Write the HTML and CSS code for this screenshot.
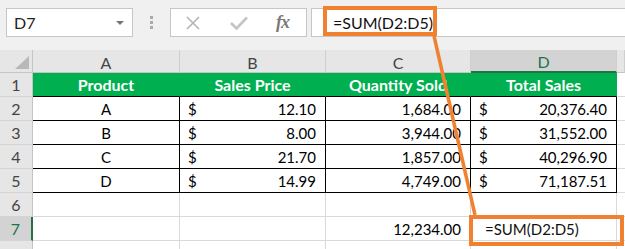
FILE: index.html
```html
<!DOCTYPE html>
<html lang="en">
<head>
    <meta charset="UTF-8">
    <meta name="viewport" content="width=device-width, initial-scale=1.0">
    <title>SUM formula</title>
    <link rel="stylesheet" href="styles.css">
</head>
<body>

    <div class="topbar">
        <div class="namebox">
            <span class="cellref">D7</span>
            <span class="caret"></span>
        </div>
        <div class="grip"><i></i><i></i><i></i></div>
        <div class="fx-buttons">
            <svg class="icon-x" width="14" height="14" viewBox="0 0 14 14">
                <path d="M1 1 L13 13 M13 1 L1 13" stroke="#b4b4b4" stroke-width="1.6" fill="none"/>
            </svg>
            <svg class="icon-check" width="18" height="14" viewBox="0 0 18 14">
                <path d="M1 7 L6.5 12.5 L17 1.5" stroke="#c4c4c4" stroke-width="2.6" fill="none"/>
            </svg>
            <span class="fx">fx</span>
        </div>
        <div class="formula">
            <span class="formula-text">=SUM(D2:D5)</span>
        </div>
    </div>

    <div class="sheet">
        <!-- column headers -->
        <div class="corner"><span class="tri"></span></div>
        <div class="colhead">A</div>
        <div class="colhead">B</div>
        <div class="colhead">C</div>
        <div class="colhead active">D</div>
        <div class="colhead"></div>

        <!-- row 1 -->
        <div class="rowhead">1</div>
        <div class="cell head">Product</div>
        <div class="cell head">Sales Price</div>
        <div class="cell head">Quantity Sold</div>
        <div class="cell head">Total Sales</div>
        <div class="cell"></div>

        <!-- row 2 -->
        <div class="rowhead">2</div>
        <div class="cell tbl center">A</div>
        <div class="cell tbl money"><span>$</span><span>12.10</span></div>
        <div class="cell tbl num">1,684.00</div>
        <div class="cell tbl money"><span>$</span><span>20,376.40</span></div>
        <div class="cell"></div>

        <!-- row 3 -->
        <div class="rowhead">3</div>
        <div class="cell tbl center">B</div>
        <div class="cell tbl money"><span>$</span><span>8.00</span></div>
        <div class="cell tbl num">3,944.00</div>
        <div class="cell tbl money"><span>$</span><span>31,552.00</span></div>
        <div class="cell"></div>

        <!-- row 4 -->
        <div class="rowhead">4</div>
        <div class="cell tbl center">C</div>
        <div class="cell tbl money"><span>$</span><span>21.70</span></div>
        <div class="cell tbl num">1,857.00</div>
        <div class="cell tbl money"><span>$</span><span>40,296.90</span></div>
        <div class="cell"></div>

        <!-- row 5 -->
        <div class="rowhead">5</div>
        <div class="cell tbl center">D</div>
        <div class="cell tbl money"><span>$</span><span>14.99</span></div>
        <div class="cell tbl num">4,749.00</div>
        <div class="cell tbl money"><span>$</span><span>71,187.51</span></div>
        <div class="cell"></div>

        <!-- row 6 -->
        <div class="rowhead">6</div>
        <div class="cell"></div>
        <div class="cell"></div>
        <div class="cell"></div>
        <div class="cell"></div>
        <div class="cell"></div>

        <!-- row 7 -->
        <div class="rowhead active">7</div>
        <div class="cell"></div>
        <div class="cell"></div>
        <div class="cell num">12,234.00</div>
        <div class="cell selected"><span class="cell-formula">=SUM(D2:D5)</span></div>
        <div class="cell"></div>

        <!-- row 8, only its top edge is in view -->
        <div class="rowhead"></div>
        <div class="cell"></div>
        <div class="cell"></div>
        <div class="cell"></div>
        <div class="cell"></div>
        <div class="cell"></div>
    </div>

    <!-- callout drawn on top of the sheet -->
    <svg class="callout" width="625" height="249" viewBox="0 0 625 249">
        <rect x="325" y="8" width="110" height="26" fill="none" stroke="#f08130" stroke-width="4"/>
        <line x1="434" y1="36" x2="475" y2="215" stroke="#f08130" stroke-width="3.5"/>
        <rect x="471" y="217" width="151" height="27" fill="none" stroke="#f08130" stroke-width="4"/>
    </svg>

</body>
</html>
```

FILE: styles.css
```css
/* General styles */
body {
    margin: 0;
    width: 625px;
    height: 249px;
    overflow: hidden;
    position: relative;
    font-family: Lato, "Liberation Sans", sans-serif;
    background-color: #fff;
    color: #000;
}

/* Formula bar */
.topbar {
    height: 50px;
    box-sizing: border-box;
    padding-top: 8px;
    display: flex;
    align-items: flex-start;
    background-color: #f0f0f0;
}

.namebox {
    margin-left: 6px;
    width: 127px;
    height: 29px;
    box-sizing: border-box;
    background-color: #fff;
    border: 1px solid #c6c6c6;
    display: flex;
    align-items: center;
    justify-content: space-between;
    padding: 0 8px 0 7px;
}

.cellref {
    font-size: 16px;
    color: #222;
}

.caret {
    width: 0;
    height: 0;
    border-left: 4px solid transparent;
    border-right: 4px solid transparent;
    border-top: 4px solid #777;
}

.grip {
    width: 37px;
    height: 29px;
    display: flex;
    flex-direction: column;
    align-items: center;
    justify-content: center;
    gap: 2px;
}

.grip i {
    width: 3px;
    height: 3px;
    background-color: #aaa;
}

.fx-buttons {
    width: 137px;
    height: 29px;
    box-sizing: border-box;
    background-color: #fff;
    border: 1px solid #c6c6c6;
    display: flex;
    align-items: center;
    padding-left: 15px;
}

.icon-x {
    margin-right: 30px;
}

.icon-check {
    margin-right: 28px;
}

.fx {
    font-family: "Liberation Serif", serif;
    font-style: italic;
    font-weight: bold;
    font-size: 18px;
    color: #7a7a7a;
    letter-spacing: -1px;
}

.formula {
    flex: 1;
    margin-left: 4px;
    height: 29px;
    box-sizing: border-box;
    background-color: #fff;
    border: 1px solid #c6c6c6;
    border-right: none;
    display: flex;
    align-items: center;
    padding-left: 21px;
}

.formula-text {
    font-size: 16px;
    color: #111;
}

/* Sheet grid */
.sheet {
    display: grid;
    grid-template-columns: 33px 147px 146px 145px 146px 8px;
    grid-template-rows: 23px repeat(8, 24px);
    font-size: 15px;
}

.corner,
.colhead,
.rowhead {
    background-color: #e6e6e6;
    color: #444;
    font-size: 16px;
    box-sizing: border-box;
    display: flex;
    align-items: center;
    justify-content: center;
}

.corner {
    border-right: 1px solid #c4c4c4;
    border-bottom: 1px solid #c4c4c4;
    position: relative;
}

.tri {
    position: absolute;
    right: 3px;
    bottom: 3px;
    width: 14px;
    height: 13px;
    background-color: #b8b8b8;
    clip-path: polygon(100% 0, 100% 100%, 0 100%);
}

.colhead {
    border-right: 1px solid #cfcfcf;
    border-bottom: 1px solid #c4c4c4;
    padding-top: 2px;
}

.colhead.active {
    background-color: #d3d3d3;
    color: #217346;
    border-bottom: 2px solid #217346;
}

.rowhead {
    border-right: 1px solid #c4c4c4;
    border-bottom: 1px solid #d4d4d4;
}

.rowhead.active {
    background-color: #d3d3d3;
    color: #217346;
    border-right: 2px solid #217346;
}

.cell {
    box-sizing: border-box;
    border-right: 1px solid #d9d9d9;
    border-bottom: 1px solid #d9d9d9;
    display: flex;
    align-items: center;
    padding: 0 9px;
    white-space: nowrap;
}

.cell.head {
    background-color: #00b050;
    color: #fff;
    font-size: 16px;
    font-weight: bold;
    justify-content: center;
    border-right-color: #00b050;
    border-bottom-color: #000;
}

.cell.tbl {
    border-right-color: #000;
    border-bottom-color: #000;
}

.cell.center {
    justify-content: center;
}

.cell.num {
    justify-content: flex-end;
}

.cell.money {
    justify-content: space-between;
    padding-left: 8px;
}

.cell-formula {
    padding-left: 5px;
    color: #111;
}

/* Annotation layer */
.callout {
    position: absolute;
    left: 0;
    top: 0;
    pointer-events: none;
}
```
